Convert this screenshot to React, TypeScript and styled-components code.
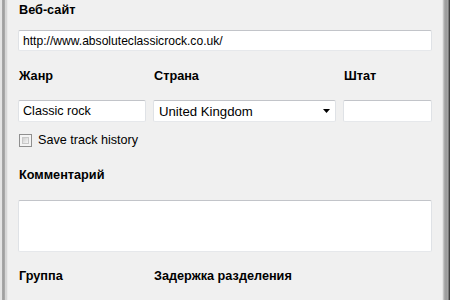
import React from "react";
import styled, { createGlobalStyle } from "styled-components";

const Global = createGlobalStyle`
  html, body { margin: 0; padding: 0; background: #f0f0f0; }
  body { font-family: "Liberation Sans", Arial, sans-serif; }
  * { box-sizing: border-box; }
`;

const Window = styled.div`
  width: 450px;
  height: 300px;
  display: flex;
  overflow: hidden;
  background: #f0f0f0;
`;

const FrameLeft = styled.div`
  width: 8px;
  flex: none;
  background: linear-gradient(
    to right,
    #e4e4e4 0px, #e4e4e4 2px,
    #a9a9a9 2px, #9c9c9c 4px, #b4b4b4 5px,
    #d6d6d6 5px, #d6d6d6 7px,
    #e9e9e9 7px, #e9e9e9 8px
  );
`;

const FrameRight = styled.div`
  width: 8px;
  flex: none;
  background: linear-gradient(
    to right,
    #e6e6e6 0px, #e6e6e6 1px,
    #c4c4c4 1px, #c4c4c4 2px,
    #b0b0b0 2px, #9a9a9a 4px, #a8a8a8 6px,
    #505050 7px, #2e2e2e 8px
  );
`;

const Content = styled.div`
  flex: 1;
  padding: 3px 10px 0 10px;
  display: flex;
  flex-direction: column;
`;

const Label = styled.div<{ $mt?: number }>`
  font-weight: bold;
  font-size: 12.7px;
  line-height: 15px;
  color: #000;
  padding-left: 1px;
  margin-top: ${(p) => p.$mt ?? 0}px;
  white-space: nowrap;
`;

const Grid = styled.div<{ $mt?: number }>`
  display: grid;
  grid-template-columns: 128px 183px 89px;
  column-gap: 7px;
  margin-top: ${(p) => p.$mt ?? 0}px;
`;

const boxStyles = `
  background: #ffffff;
  border: 1px solid;
  border-color: #c2c4c9 #dfe2e6 #e6e8eb #dfe2e6;
  border-radius: 2px;
`;

const TextBox = styled.div<{ $h?: number; $mt?: number; $fs?: number }>`
  ${boxStyles}
  height: ${(p) => p.$h ?? 22}px;
  margin-top: ${(p) => p.$mt ?? 0}px;
  padding-left: 4px;
  display: flex;
  align-items: center;
  font-size: ${(p) => p.$fs ?? 12}px;
  color: #000;
  white-space: nowrap;
  overflow: hidden;
`;

const Select = styled.div`
  ${boxStyles}
  height: 22px;
  padding: 0 5px 0 5px;
  display: flex;
  align-items: center;
  justify-content: space-between;
  font-size: 13.2px;
  color: #000;
`;

const TextArea = styled.div`
  ${boxStyles}
  height: 52px;
  margin-top: 17px;
`;

const CheckRow = styled.label`
  display: flex;
  align-items: center;
  gap: 6px;
  margin-top: 11px;
  padding-left: 1px;
  font-size: 12.6px;
  line-height: 14px;
  color: #000;
`;

const CheckBox = styled.span`
  width: 13px;
  height: 13px;
  border: 1px solid #8f8f8f;
  background: #f4f4f4;
  display: flex;
  padding: 2px;
  & > span {
    flex: 1;
    background: linear-gradient(135deg, #cfcfcf, #f6f6f6);
    border: 1px solid #c8c8c8;
  }
`;

const Arrow = () => (
  <svg width="7" height="4" viewBox="0 0 7 4">
    <path d="M0 0H7L3.5 4Z" fill="#000" />
  </svg>
);

export default function App() {
  return (
    <Window>
      <Global />
      <FrameLeft />
      <Content>
        <Label>Веб-сайт</Label>
        <TextBox $h={21} $mt={12} $fs={12.1}>http://www.absoluteclassicrock.co.uk/</TextBox>
        <Grid $mt={18}>
          <Label>Жанр</Label>
          <Label>Страна</Label>
          <Label>Штат</Label>
        </Grid>
        <Grid $mt={16}>
          <TextBox $fs={12.6}>Classic rock</TextBox>
          <Select>
            <span>United Kingdom</span>
            <Arrow />
          </Select>
          <TextBox />
        </Grid>
        <CheckRow>
          <CheckBox>
            <span />
          </CheckBox>
          Save track history
        </CheckRow>
        <Label $mt={21}>Комментарий</Label>
        <TextArea />
        <Grid $mt={17}>
          <Label>Группа</Label>
          <Label>Задержка разделения</Label>
        </Grid>
      </Content>
      <FrameRight />
    </Window>
  );
}
